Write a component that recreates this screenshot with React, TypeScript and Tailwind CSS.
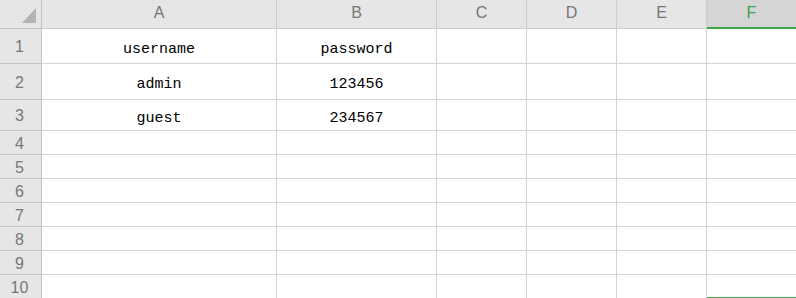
const cols = ['A', 'B', 'C', 'D', 'E', 'F'];
const widths = 'grid-cols-[42px_235px_160px_90px_90px_90px_89px]';

const rows: { h: string; cells: string[] }[] = [
  { h: 'h-[35px]', cells: ['username', 'password'] },
  { h: 'h-[36px]', cells: ['admin', '123456'] },
  { h: 'h-[31px]', cells: ['guest', '234567'] },
  { h: 'h-[24px]', cells: [] },
  { h: 'h-[24px]', cells: [] },
  { h: 'h-[24px]', cells: [] },
  { h: 'h-[24px]', cells: [] },
  { h: 'h-[24px]', cells: [] },
  { h: 'h-[24px]', cells: [] },
  { h: 'h-[24px]', cells: [] },
];

export default function App() {
  return (
    <div className="w-[796px] h-[298px] overflow-hidden bg-white">
      <div className={`grid ${widths}`}>
        {/* corner */}
        <div className="h-[29px] bg-[#e6e6e6] border-r border-b border-[#c4c4c4] flex items-start pl-[22px] pt-[8px]">
          <svg width="14" height="15" viewBox="0 0 14 15">
            <polygon points="14,0 14,15 0,15" fill="#b4b4b4" />
          </svg>
        </div>
        {cols.map((c) =>
          c === 'F' ? (
            <div
              key={c}
              className="h-[29px] bg-[#d5d5d5] border-b-2 border-[#3fa447] flex items-center justify-center text-[16px] text-[#3fa447] font-['Liberation_Sans',sans-serif] pb-[2px]"
            >
              {c}
            </div>
          ) : (
            <div
              key={c}
              className="h-[29px] bg-[#e6e6e6] border-r border-b border-[#cdcdcd] flex items-center justify-center text-[16px] text-[#777] font-['Liberation_Sans',sans-serif] pb-[2px]"
            >
              {c}
            </div>
          )
        )}

        {rows.map((row, i) => (
          <Row key={i} index={i} h={row.h} cells={row.cells} last={i === rows.length - 1} />
        ))}
      </div>
    </div>
  );
}

function Row({ index, h, cells, last }: { index: number; h: string; cells: string[]; last: boolean }) {
  return (
    <>
      <div
        className={`${h} bg-[#e6e6e6] border-r border-b border-[#c4c4c4] flex items-center justify-center pr-[2px] pt-[2px] text-[16px] text-[#777] font-['Liberation_Sans',sans-serif]`}
      >
        {index + 1}
      </div>
      {cols.map((c, j) => (
        <div
          key={c}
          className={`${h} ${
            c === 'F'
              ? last
                ? 'border-b-2 border-[#3fa447]'
                : 'border-b border-[#d4d4d4]'
              : 'border-r border-b border-[#d4d4d4]'
          } flex items-center justify-center pt-[8px] text-[15px] text-black font-['Liberation_Mono',monospace]`}
        >
          {cells[j] ?? ''}
        </div>
      ))}
    </>
  );
}
